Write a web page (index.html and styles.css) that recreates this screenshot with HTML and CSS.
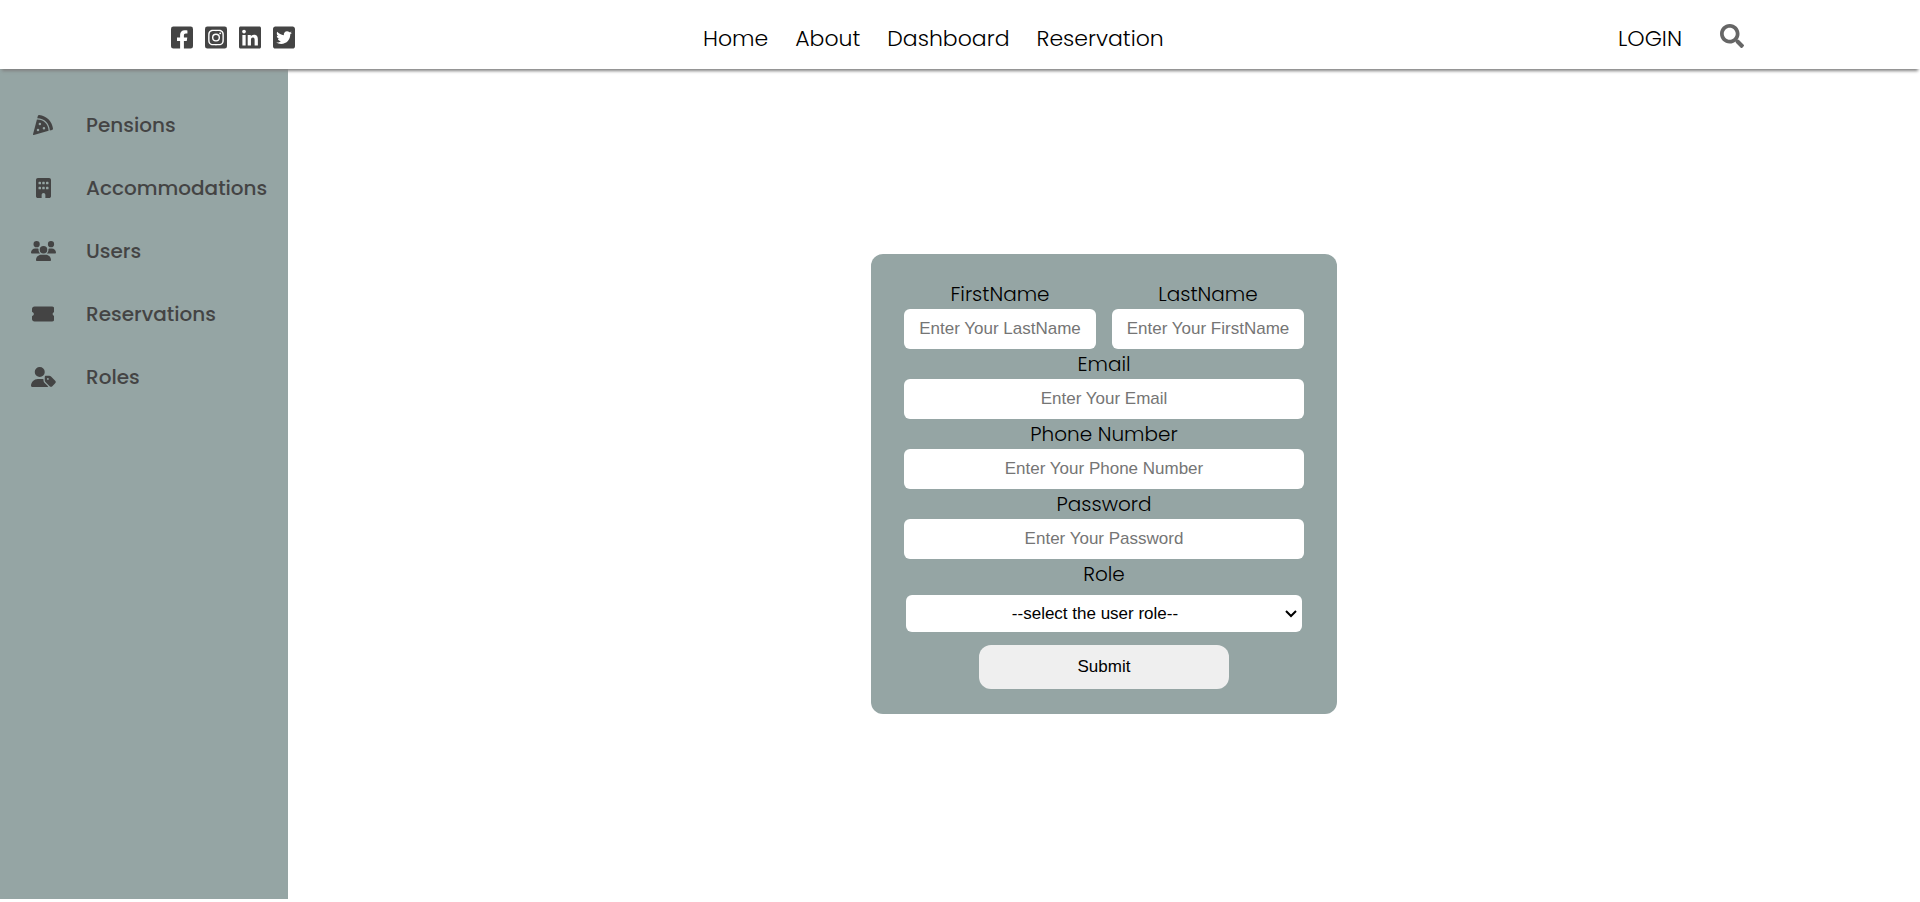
FILE: index.html
```html
<!DOCTYPE html>
<html lang="en">
<head>
  <meta charset="utf-8">
  <meta name="viewport" content="width=device-width, initial-scale=1">
  <title>Users</title>
  <link rel="stylesheet" href="styles.css">
</head>
<body>
  <header class="topbar">
    <div class="social">
      <a href="#" aria-label="Facebook"><svg viewBox="0 0 448 512"><path d="M400 32H48A48 48 0 0 0 0 80v352a48 48 0 0 0 48 48h137.25V327.69h-63V256h63v-54.64c0-62.15 37-96.48 93.67-96.48 27.14 0 55.52 4.84 55.52 4.84v61h-31.27c-30.81 0-40.42 19.12-40.42 38.73V256h68.78l-11 71.69h-57.78V480H400a48 48 0 0 0 48-48V80a48 48 0 0 0-48-48z"/></svg></a>
      <a href="#" aria-label="Instagram"><svg viewBox="0 0 448 512"><path d="M224,202.66A53.34,53.34,0,1,0,277.36,256,53.38,53.38,0,0,0,224,202.66Zm124.71-41a54,54,0,0,0-30.41-30.41c-21-8.29-71-6.43-94.3-6.43s-73.25-1.93-94.31,6.43a54,54,0,0,0-30.41,30.41c-8.28,21-6.43,71.05-6.43,94.33S91,329.26,99.32,350.33a54,54,0,0,0,30.41,30.41c21,8.29,71,6.43,94.31,6.43s73.24,1.93,94.3-6.43a54,54,0,0,0,30.41-30.41c8.35-21,6.43-71.05,6.43-94.33S357.1,182.74,348.75,161.67ZM224,338a82,82,0,1,1,82-82A81.9,81.9,0,0,1,224,338Zm85.38-148.3a19.14,19.14,0,1,1,19.13-19.14A19.1,19.1,0,0,1,309.42,189.74ZM400,32H48A48,48,0,0,0,0,80V432a48,48,0,0,0,48,48H400a48,48,0,0,0,48-48V80A48,48,0,0,0,400,32ZM382.88,322c-1.29,25.63-7.14,48.34-25.85,67s-41.4,24.63-67,25.85c-26.41,1.49-105.59,1.49-132,0-25.63-1.29-48.26-7.15-67-25.85s-24.63-41.42-25.85-67c-1.49-26.42-1.49-105.61,0-132,1.29-25.63,7.07-48.34,25.85-67s41.47-24.56,67-25.78c26.41-1.49,105.59-1.49,132,0,25.63,1.29,48.33,7.15,67,25.85s24.63,41.42,25.85,67.05C384.37,216.44,384.37,295.56,382.88,322Z"/></svg></a>
      <a href="#" aria-label="LinkedIn"><svg viewBox="0 0 448 512"><path d="M416 32H31.9C14.3 32 0 46.5 0 64.3v383.4C0 465.5 14.3 480 31.9 480H416c17.6 0 32-14.5 32-32.3V64.3c0-17.8-14.4-32.3-32-32.3zM135.4 416H69V202.2h66.5V416zm-33.2-243c-21.3 0-38.5-17.3-38.5-38.5S80.9 96 102.2 96c21.2 0 38.5 17.3 38.5 38.5 0 21.3-17.2 38.5-38.5 38.5zm282.1 243h-66.4V312c0-24.8-.5-56.7-34.5-56.7-34.6 0-39.9 27-39.9 54.9V416h-66.4V202.2h63.7v29.2h.9c8.9-16.8 30.6-34.5 62.9-34.5 67.2 0 79.7 44.3 79.7 101.9V416z"/></svg></a>
      <a href="#" aria-label="Twitter"><svg viewBox="0 0 448 512"><path d="M400 32H48C21.5 32 0 53.5 0 80v352c0 26.5 21.5 48 48 48h352c26.5 0 48-21.5 48-48V80c0-26.5-21.5-48-48-48zm-48.9 158.8c.2 2.8.2 5.7.2 8.5 0 86.7-66 186.6-186.6 186.6-37.2 0-71.7-10.8-100.7-29.4 5.3.6 10.4.8 15.8.8 30.7 0 58.9-10.4 81.4-28-28.8-.6-53-19.5-61.3-45.5 10.1 1.5 19.2 1.5 29.6-1.2-30-6.1-52.5-32.5-52.5-64.4v-.8c8.7 4.9 18.9 7.9 29.6 8.3a65.447 65.447 0 0 1-29.2-54.6c0-12.2 3.2-23.4 8.9-33.1 32.3 39.8 80.8 65.8 135.2 68.6-9.3-44.5 24-80.6 64-80.6 18.9 0 35.9 7.9 47.9 20.7 14.8-2.8 29-8.3 41.6-15.8-4.9 15.2-15.2 28-28.8 36.1 13.2-1.4 26-5.1 37.8-10.2-8.9 13.1-20.1 24.7-32.9 34z"/></svg></a>
    </div>
    <nav class="nav">
      <a href="#">Home</a>
      <a href="#">About</a>
      <a href="#">Dashboard</a>
      <a href="#">Reservation</a>
    </nav>
    <div class="account">
      <a href="#">LOGIN</a>
      <button class="search" type="button" aria-label="Search"><svg viewBox="0 0 512 512"><path d="M505 442.7L405.3 343c-4.5-4.5-10.6-7-17-7H372c27.6-35.3 44-79.7 44-128C416 93.1 322.9 0 208 0S0 93.1 0 208s93.1 208 208 208c48.3 0 92.7-16.4 128-44v16.3c0 6.4 2.5 12.5 7 17l99.7 99.7c9.4 9.4 24.6 9.4 33.9 0l28.3-28.3c9.4-9.4 9.4-24.6.1-34zM208 336c-70.7 0-128-57.2-128-128 0-70.7 57.2-128 128-128 70.7 0 128 57.2 128 128 0 70.7-57.2 128-128 128z"/></svg></button>
    </div>
  </header>

  <div class="layout">
    <nav class="sidebar" aria-label="Dashboard">
      <a href="#"><svg viewBox="0 0 512 512"><path d="M158.87.15c-16.16-1.52-31.2 8.42-35.33 24.12l-14.81 56.27c187.62 5.49 314.54 130.61 322.48 317l56.94-15.78c15.72-4.36 25.49-19.68 23.62-35.9C490.89 165.08 340.78 17.32 158.87.15zm-58.47 112L.55 491.64a16.21 16.21 0 0 0 20 19.75l379-105.1c-4.27-174.89-123.08-292.14-299.15-294.1zM128 416a32 32 0 1 1 32-32 32 32 0 0 1-32 32zm48-152a32 32 0 1 1 32-32 32 32 0 0 1-32 32zm104 104a32 32 0 1 1 32-32 32 32 0 0 1-32 32z"/></svg><span>Pensions</span></a>
      <a href="#"><svg viewBox="0 0 384 512"><path fill-rule="evenodd" d="M48 0C21.5 0 0 21.5 0 48V464c0 26.5 21.5 48 48 48h96V432c0-26.5 21.5-48 48-48s48 21.5 48 48v80h96c26.5 0 48-21.5 48-48V48c0-26.5-21.5-48-48-48H48zM80 96h32q16 0 16 16v32q0 16-16 16H80q-16 0-16-16v-32q0-16 16-16zM176 96h32q16 0 16 16v32q0 16-16 16h-32q-16 0-16-16v-32q0-16 16-16zM272 96h32q16 0 16 16v32q0 16-16 16h-32q-16 0-16-16v-32q0-16 16-16zM80 224h32q16 0 16 16v32q0 16-16 16H80q-16 0-16-16v-32q0-16 16-16zM176 224h32q16 0 16 16v32q0 16-16 16h-32q-16 0-16-16v-32q0-16 16-16zM272 224h32q16 0 16 16v32q0 16-16 16h-32q-16 0-16-16v-32q0-16 16-16z"/></svg><span>Accommodations</span></a>
      <a href="#"><svg viewBox="0 0 640 512"><path d="M144 0a80 80 0 1 1 0 160A80 80 0 1 1 144 0zM512 0a80 80 0 1 1 0 160A80 80 0 1 1 512 0zM0 298.7C0 239.8 47.8 192 106.7 192h42.7c15.9 0 31 3.5 44.6 9.7c-1.3 7.2-1.9 14.7-1.9 22.3c0 38.2 16.8 72.5 43.3 96c-.2 0-.4 0-.7 0H21.3C9.6 320 0 310.4 0 298.7zM405.3 320c-.2 0-.4 0-.7 0c26.6-23.5 43.3-57.8 43.3-96c0-7.6-.7-15-1.9-22.3c13.6-6.3 28.7-9.7 44.6-9.7h42.7C592.2 192 640 239.8 640 298.7c0 11.8-9.6 21.3-21.3 21.3H405.3zM224 224a96 96 0 1 1 192 0 96 96 0 1 1 -192 0zM128 485.3C128 411.7 187.7 352 261.3 352H378.7C452.3 352 512 411.7 512 485.3c0 14.7-11.9 26.7-26.7 26.7H154.7c-14.7 0-26.7-11.9-26.7-26.7z"/></svg><span>Users</span></a>
      <a href="#"><svg viewBox="0 0 576 512"><path d="M64 64C28.7 64 0 92.7 0 128v64c0 8.8 7.4 15.7 15.7 18.6C34.5 217.1 48 235 48 256s-13.5 38.9-32.3 45.4C7.4 304.3 0 311.2 0 320v64c0 35.3 28.7 64 64 64H512c35.3 0 64-28.7 64-64V320c0-8.8-7.4-15.7-15.7-18.6C541.5 294.9 528 277 528 256s13.5-38.9 32.3-45.4c8.3-2.9 15.7-9.8 15.7-18.6V128c0-35.3-28.7-64-64-64H64z"/></svg><span>Reservations</span></a>
      <a href="#"><svg viewBox="0 0 640 512"><path d="M224 256A128 128 0 1 0 224 0a128 128 0 1 0 0 256zm-45.7 48C79.8 304 0 383.8 0 482.3C0 498.7 13.3 512 29.7 512H418.3c10 0 18.8-4.9 24.2-12.5l-99.2-99.2c-14.9-14.9-23.3-35.1-23.3-56.1v-33c-15.9-4.7-32.8-7.2-50.3-7.2H178.3zM384 224c-17.7 0-32 14.3-32 32v82.7c0 17 6.7 33.3 18.7 45.3L478.1 491.3c18.7 18.7 49.1 18.7 67.9 0l73.4-73.4c18.7-18.7 18.7-49.1 0-67.9L512 242.7c-12-12-28.3-18.7-45.3-18.7H384zm24 80a24 24 0 1 1 48 0 24 24 0 1 1 -48 0z"/></svg><span>Roles</span></a>
    </nav>

    <main class="content">
      <form class="card">
        <div class="pair">
          <div class="field">
            <label for="first">FirstName</label>
            <input id="first" type="text" placeholder="Enter Your LastName">
          </div>
          <div class="field">
            <label for="last">LastName</label>
            <input id="last" type="text" placeholder="Enter Your FirstName">
          </div>
        </div>
        <div class="field">
          <label for="email">Email</label>
          <input id="email" type="email" placeholder="Enter Your Email">
        </div>
        <div class="field">
          <label for="phone">Phone Number</label>
          <input id="phone" type="tel" placeholder="Enter Your Phone Number">
        </div>
        <div class="field">
          <label for="password">Password</label>
          <input id="password" type="password" placeholder="Enter Your Password">
        </div>
        <div class="field">
          <label for="role">Role</label>
          <div class="select">
            <select id="role">
              <option>--select the user role--</option>
            </select>
            <svg viewBox="0 0 12 8"><path d="M1 1l5 5 5-5"/></svg>
          </div>
        </div>
        <button class="submit" type="submit">Submit</button>
      </form>
    </main>
  </div>
</body>
</html>
```

FILE: styles.css
```css
* {
  box-sizing: border-box;
}

body {
  margin: 0;
  background: #fff;
  color: #000;
  font-family: Poppins, Inter, "Open Sans", sans-serif;
  font-weight: 300;
}

a {
  color: inherit;
  text-decoration: none;
}

svg {
  display: block;
  fill: currentColor;
}

.topbar {
  position: relative;
  z-index: 1;
  display: grid;
  grid-template-columns: 10fr auto 11fr;
  align-items: center;
  height: 69px;
  padding: 7px 171px 0;
  background: #fff;
  box-shadow: 0 4px 3px -2px #808080;
  font-size: 22px;
}

.social {
  display: flex;
  gap: 12px;
  color: #444;
}

.social svg {
  width: 22px;
}

.nav {
  display: flex;
  gap: 27px;
}

.account {
  display: flex;
  justify-content: flex-end;
  align-items: center;
  gap: 38px;
}

.search {
  padding: 0 5px 4px 0;
  border: 0;
  background: none;
  color: #666;
}

.search svg {
  height: 24px;
}

.layout {
  display: flex;
  min-height: 92vh;
}

.sidebar {
  flex: none;
  display: flex;
  flex-direction: column;
  width: 288px;
  padding-top: 24px;
  background: #95a5a4;
  color: #444;
  font-size: 20px;
  font-weight: 500;
}

.sidebar a {
  display: grid;
  grid-template-columns: 86px 1fr;
  align-items: center;
  height: 63px;
}

.sidebar svg {
  height: 20px;
  justify-self: center;
}

.content {
  flex: 1;
  display: grid;
  place-items: center;
}

.card {
  display: flex;
  flex-direction: column;
  width: 466px;
  padding: 25px 33px;
  border-radius: 12px;
  background: #95a5a4;
}

.pair {
  display: grid;
  grid-template-columns: 1fr 1fr;
  gap: 16px;
}

.field {
  display: flex;
  flex-direction: column;
  text-align: center;
}

label {
  font-size: 20px;
  line-height: 30px;
}

input,
select,
.submit {
  border: 0;
  font-family: Arial, "Liberation Sans", sans-serif;
  font-size: 17px;
  text-align: center;
}

input {
  width: 100%;
  height: 40px;
  padding: 0 8px;
  border-radius: 6px;
  background: #fff;
}

input::placeholder {
  color: #757575;
}

.select {
  position: relative;
  margin: 6px 2px 13px;
}

select {
  display: block;
  width: 100%;
  height: 37px;
  padding: 0 18px 0 0;
  border-radius: 6px;
  background: #fff;
  color: #000;
  appearance: none;
  text-align-last: center;
}

.select svg {
  position: absolute;
  top: 15px;
  right: 5px;
  width: 12px;
  fill: none;
  stroke: #000;
  stroke-width: 2;
  pointer-events: none;
}

.submit {
  align-self: center;
  width: 250px;
  height: 44px;
  border-radius: 12px;
  background: #efefef;
  color: #000;
}
```
